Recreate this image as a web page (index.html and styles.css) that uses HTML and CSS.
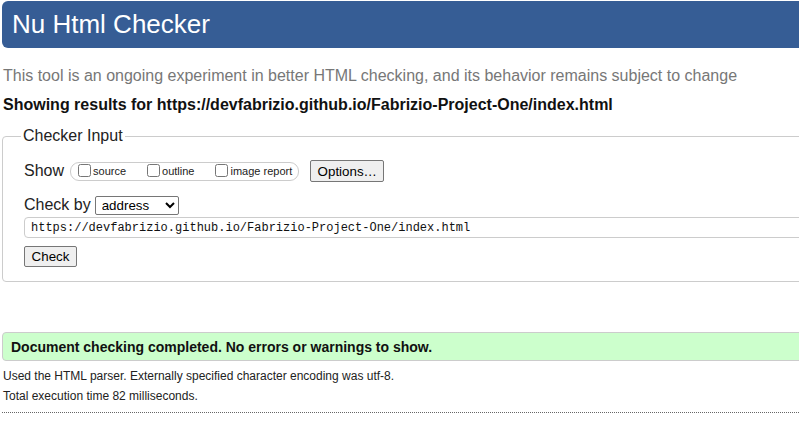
FILE: index.html
```html
<!DOCTYPE html>
<html lang="en">
<head>
<meta charset="utf-8">
<title>Nu Html Checker</title>
<link rel="stylesheet" href="styles.css">
</head>
<body>
<div class="page">
  <header class="header"><h1 class="title">Nu Html Checker</h1></header>
  <p class="intro">This tool is an ongoing experiment in better HTML checking, and its behavior remains subject to change</p>
  <p class="showing">Showing results for https://devfabrizio.github.io/Fabrizio-Project-One/index.html</p>
  <section class="checker">
    <div class="legend">Checker Input</div>
    <div class="row row-show">
      <span class="label">Show</span>
      <div class="pill">
        <label class="opt"><input type="checkbox" class="cb"><span>source</span></label>
        <label class="opt"><input type="checkbox" class="cb"><span>outline</span></label>
        <label class="opt opt-last"><input type="checkbox" class="cb"><span>image report</span></label>
      </div>
      <button class="btn btn-options" type="button">Options…</button>
    </div>
    <div class="row row-by">
      <span class="label">Check by</span>
      <select class="select"><option>address</option></select>
    </div>
    <input class="url" type="text" value="https://devfabrizio.github.io/Fabrizio-Project-One/index.html">
    <button class="btn btn-check" type="button">Check</button>
  </section>
  <div class="success">Document checking completed. No errors or warnings to show.</div>
  <p class="stat">Used the HTML parser. Externally specified character encoding was utf-8.</p>
  <p class="stat stat-2">Total execution time 82 milliseconds.</p>
  <div class="rule"></div>
</div>
</body>
</html>
```

FILE: styles.css
```css
html, body {
  margin: 0;
  padding: 0;
  overflow: hidden;
  background: #fff;
}
body {
  padding: 1px 0 0 2px;
  font-family: "Liberation Sans", Arial, sans-serif;
  color: #000;
}
.page {
  width: 797px;
  height: 433px;
  overflow: hidden;
}
.header {
  background: #365d95;
  border-radius: 6px;
  height: 47px;
  margin-right: -20px;
  display: flex;
  align-items: center;
  padding-left: 10px;
}
.title {
  margin: 0 0 1px 0;
  font-size: 26px;
  font-weight: normal;
  color: #fff;
  line-height: 30px;
}
.intro {
  margin: 19px 0 0 1px;
  font-size: 16px;
  line-height: 18px;
  color: #777;
}
.showing {
  margin: 11px 0 0 1px;
  font-size: 16px;
  line-height: 18px;
  font-weight: bold;
  color: #111;
}
.checker {
  margin: 22px -30px 0 0;
  padding: 0 0 14px 21px;
  border: 1px solid #ccc;
  border-radius: 4px;
}
.legend {
  display: block;
  width: fit-content;
  margin: -10px 0 0 -3px;
  padding: 0 2px;
  background: #fff;
  font-size: 16px;
  line-height: 18px;
  color: #222;
}
.row {
  display: flex;
  align-items: center;
}
.row-show {
  margin-top: 15px;
  height: 22px;
}
.row-by {
  margin-top: 13px;
  height: 20px;
}
.label {
  font-size: 16px;
  line-height: 18px;
  color: #222;
}
.pill {
  display: flex;
  align-items: center;
  margin-left: 6px;
  height: 17px;
  padding: 0 6px 0 7px;
  border: 1px solid #ccc;
  border-radius: 9px;
}
.opt {
  display: flex;
  align-items: center;
  font-size: 11px;
  color: #222;
  margin-right: 21px;
}
.opt-last {
  margin-right: 0;
}
.cb {
  width: 13px;
  height: 13px;
  margin: 0 2px 2px 0;
}
.btn {
  font-family: "Liberation Sans", Arial, sans-serif;
  font-size: 13.33px;
  color: #000;
  background: #efefef;
  border: 1px solid #767676;
  border-radius: 2px;
  padding: 0;
}
.btn-options {
  margin-left: 11px;
  width: 74px;
  height: 22px;
}
.select {
  margin-left: 4px;
  width: 84px;
  height: 19px;
  font-family: "Liberation Sans", Arial, sans-serif;
  font-size: 13.33px;
  padding: 0 0 0 2px;
  border: 1px solid #767676;
  border-radius: 2px;
  background: #fff;
  color: #000;
}
.url {
  display: block;
  box-sizing: border-box;
  margin-top: 2px;
  width: 820px;
  height: 21px;
  padding: 0 6px;
  border: 1px solid #ccc;
  border-radius: 4px;
  font-family: "Liberation Mono", "Courier New", monospace;
  font-size: 12px;
  color: #111;
  outline: none;
}
.btn-check {
  display: block;
  margin-top: 8px;
  width: 53px;
  height: 21px;
}
.success {
  margin: 50px -20px 0 0;
  height: 27px;
  display: flex;
  align-items: center;
  padding-left: 8px;
  background: #ccffcc;
  border: 1px solid #ccc;
  border-radius: 4px;
  font-size: 14px;
  font-weight: bold;
  color: #111;
}
.stat {
  margin: 8px 0 0 1px;
  font-size: 12px;
  line-height: 14px;
  color: #222;
}
.stat-2 {
  margin-top: 6px;
}
.rule {
  margin-top: 9px;
  border-top: 1px dotted #666;
}
```
